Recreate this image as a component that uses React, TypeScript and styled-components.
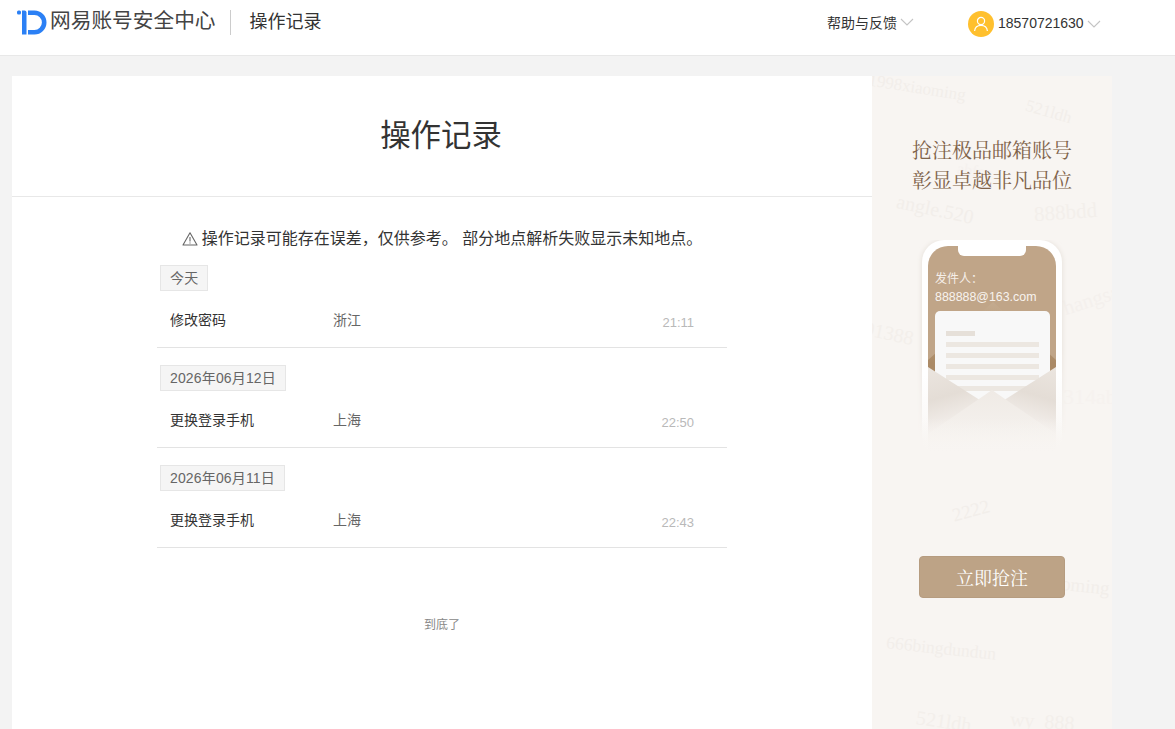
import React from 'react'
import styled, { createGlobalStyle } from 'styled-components'

const GlobalStyle = createGlobalStyle`
  html, body {
    margin: 0;
    padding: 0;
    height: 100%;
    overflow: hidden;
    background: #f3f3f3;
    font-family: "Liberation Sans", "Noto Sans CJK SC", sans-serif;
  }
`

const records = [
  { date: '今天', name: '修改密码', place: '浙江', time: '21:11' },
  { date: '2026年06月12日', name: '更换登录手机', place: '上海', time: '22:50' },
  { date: '2026年06月11日', name: '更换登录手机', place: '上海', time: '22:43' },
]

const marks = [
  { text: '1998xiaoming', x: -4, y: 2, r: 9, s: 17, c: '#f2eeea' },
  { text: '521ldh', x: 153, y: 26, r: 16, s: 17, c: '#f2eeea' },
  { text: 'abfcc', x: 85, y: 86, r: 8, s: 16, c: '#f5f1ee' },
  { text: 'angle.520', x: 24, y: 122, r: 12, s: 20, c: '#f2eeea' },
  { text: '888bdd', x: 162, y: 124, r: -4, s: 21, c: '#f3efeb' },
  { text: 'hangsan', x: 190, y: 210, r: -18, s: 21, c: '#f4f0ed' },
  { text: '91388', x: -8, y: 246, r: 12, s: 20, c: '#f3efeb' },
  { text: '314abc', x: 191, y: 308, r: 0, s: 22, c: '#f6f2ef' },
  { text: '2222', x: 80, y: 424, r: -15, s: 19, c: '#f2eeea' },
  { text: 'xiaoming', x: 166, y: 498, r: 6, s: 19, c: '#f2eeea' },
  { text: '666bingdundun', x: 14, y: 562, r: 6, s: 17.6, c: '#f2eeea' },
  { text: '521ldh', x: 44, y: 634, r: 8, s: 20, c: '#f3efeb' },
  { text: 'wy_888', x: 138, y: 634, r: 4, s: 20, c: '#f3efeb' },
]

const Header = styled.header`
  height: 55px;
  background: #fff;
  border-bottom: 1px solid #e8e8e8;
  display: flex;
  align-items: flex-start;
  padding-left: 17px;
`
const Brand = styled.div`
  display: flex;
  align-items: center;
  height: 44px;
  width: 810px;
`
const BrandName = styled.span`
  font-size: 20.7px;
  line-height: 26px;
  padding-bottom: 2px;
  color: #444;
  margin-left: 3px;
  white-space: nowrap;
`
const Divider = styled.i`
  width: 1px;
  height: 25px;
  background: #ccc;
  margin: 0 19px 0 14px;
`
const PageName = styled.span`
  font-size: 18px;
  line-height: 24px;
  padding-bottom: 1px;
  color: #333;
`
const HeaderLink = styled.div`
  display: flex;
  align-items: center;
  height: 47px;
  font-size: 14px;
  color: #333;
  gap: 3px;
`
const HelpLink = styled(HeaderLink)`
  width: 141px;
  height: 44px;
`
const Avatar = styled.span`
  width: 26px;
  height: 26px;
  border-radius: 50%;
  background: #ffc02e;
  display: flex;
  align-items: center;
  justify-content: center;
`
const Account = styled.span`
  margin-left: 1px;
  padding-bottom: 2px;
`
const Wrap = styled.div`
  display: flex;
  width: 1100px;
  margin: 20px 0 0 12px;
`
const Main = styled.main`
  width: 860px;
  height: 653px;
  background: #fff;
`
const Title = styled.h1`
  margin: 0;
  height: 120px;
  padding-right: 2px;
  line-height: 118px;
  font-size: 30.4px;
  font-weight: 400;
  color: #333;
  text-align: center;
  border-bottom: 1px solid #e8e8e8;
`
const Notice = styled.p`
  margin: 30px 0 0;
  height: 24px;
  display: flex;
  align-items: center;
  justify-content: center;
  gap: 4px;
  font-size: 16px;
  line-height: 24px;
  color: #333;
  white-space: pre;
`
const List = styled.section`
  width: 570px;
  margin: 14px 0 0 145px;
`
const Group = styled.div`
  height: 82px;
  margin-bottom: 17px;
  border-bottom: 1px solid #e3e3e3;
`
const DateTag = styled.span`
  display: inline-block;
  margin-left: 3px;
  padding: 0 9px;
  height: 24px;
  line-height: 24px;
  font-size: 14px;
  letter-spacing: 0.15px;
  color: #666;
  background: #f5f5f5;
  border: 1px solid #e6e6e6;
`
const Row = styled.div`
  display: flex;
  align-items: flex-start;
  height: 56px;
  padding: 18px 33px 0 13px;
  box-sizing: border-box;
  font-size: 14px;
  line-height: 22px;
`
const RecordName = styled.span`
  width: 163px;
  color: #333;
`
const Place = styled.span`
  flex: 1;
  color: #666;
`
const Time = styled.span`
  font-size: 13px;
  color: #b9b9b9;
  padding-top: 3px;
`
const Bottom = styled.p`
  margin: 69px 0 0;
  font-size: 12px;
  line-height: 16px;
  color: #888;
  text-align: center;
`
const Ad = styled.aside`
  position: relative;
  width: 240px;
  height: 653px;
  overflow: hidden;
  background: #f8f5f2;
  display: flex;
  flex-direction: column;
  align-items: center;
  font-family: "Noto Serif CJK SC", "Liberation Serif", serif;
`
const Mark = styled.span<{ $x: number; $y: number; $r: number; $s: number; $c: string }>`
  position: absolute;
  left: ${p => p.$x}px;
  top: ${p => p.$y}px;
  transform: rotate(${p => p.$r}deg);
  font-family: "Liberation Serif", serif;
  font-size: ${p => p.$s}px;
  white-space: nowrap;
  color: ${p => p.$c};
`
const Slogan = styled.div`
  position: relative;
  margin-top: 59px;
  font-size: 20px;
  line-height: 30px;
  color: #7f634a;
  text-align: center;
`
const Phone = styled.svg`
  position: relative;
  display: block;
  flex: none;
  margin-top: 45px;
  width: 150px;
  height: 220px;
`
const GrabButton = styled.button`
  position: relative;
  flex: none;
  width: 146px;
  height: 42px;
  margin-top: 96px;
  padding: 0;
  border: 1px solid #b69c80;
  border-radius: 4px;
  background: #bda386;
  color: #fff;
  font-family: inherit;
  font-size: 18px;
`

const Chevron = () => (
  <svg width="14" height="8" viewBox="0 0 14 8" fill="none" stroke="#c4c4c4" strokeWidth="1.1">
    <path d="M1 1l6 6 6-6" />
  </svg>
)

const Logo = () => (
  <svg width="30" height="25" viewBox="0 0 30 25">
    <rect x="0" y="0.5" width="4" height="4" rx="1.5" fill="#2b80f5" />
    <path d="M5 0.5h2.5a2 2 0 0 1 2 2V24.5H5z" fill="#2b80f5" />
    <path d="M11 0.5h6.5a12 12 0 0 1 0 24H11v-4.6h6.5a7.4 7.4 0 0 0 0-14.8H11z" fill="#2b80f5" />
  </svg>
)

const PhoneArt = () => (
  <Phone viewBox="0 0 150 220">
    <defs>
      <filter id="soft" x="-10%" y="-10%" width="120%" height="120%">
        <feGaussianBlur stdDeviation="2" />
      </filter>
      <linearGradient id="halo" x1="0" y1="0" x2="0" y2="1">
        <stop offset="0.5" stopColor="#e9e4de" />
        <stop offset="0.92" stopColor="#f8f5f2" />
      </linearGradient>
      <linearGradient id="fade" x1="0" y1="0" x2="0" y2="1">
        <stop offset="0.62" stopColor="#fff" />
        <stop offset="1" stopColor="#f8f5f2" />
      </linearGradient>
      <linearGradient id="back" x1="0" y1="0" x2="0" y2="1">
        <stop offset="0" stopColor="#c4ab8f" />
        <stop offset="0.62" stopColor="#ab8a66" />
      </linearGradient>
      <linearGradient id="flapL" gradientUnits="userSpaceOnUse" x1="11" y1="127" x2="30" y2="190">
        <stop offset="0" stopColor="#ebe5df" />
        <stop offset="0.5" stopColor="#e4ddd6" />
        <stop offset="1" stopColor="#f5f1ee" />
      </linearGradient>
      <linearGradient id="flapR" gradientUnits="userSpaceOnUse" x1="139" y1="127" x2="120" y2="190">
        <stop offset="0" stopColor="#ebe5df" />
        <stop offset="0.5" stopColor="#e4ddd6" />
        <stop offset="1" stopColor="#f5f1ee" />
      </linearGradient>
      <linearGradient id="front" x1="0" y1="0" x2="0" y2="1">
        <stop offset="0" stopColor="#efeae5" />
        <stop offset="1" stopColor="#f7f4f1" />
      </linearGradient>
      <linearGradient id="veil" x1="0" y1="0" x2="0" y2="1">
        <stop offset="0" stopColor="#f8f5f2" stopOpacity="0" />
        <stop offset="0.8" stopColor="#f8f5f2" />
      </linearGradient>
    </defs>
    <rect x="4" y="0" width="142" height="218" rx="22" fill="url(#halo)" filter="url(#soft)" />
    <rect x="5" y="0" width="140" height="218" rx="22" fill="url(#fade)" />
    <path d="M11 26a20 20 0 0 1 20-20h88a20 20 0 0 1 20 20v186H11z" fill="#c0a588" />
    <path d="M11 120l65-58 63 58v40H11z" fill="url(#back)" />
    <path d="M41 6h68v4a6 6 0 0 1-6 6H47a6 6 0 0 1-6-6z" fill="#fff" />
    <text x="18" y="43" fontFamily="Noto Sans CJK SC, sans-serif" fontSize="12" fill="#f6efe8">发件人：</text>
    <text x="18" y="61" fontFamily="Liberation Sans, sans-serif" fontSize="12.4" fill="#f8f3ee">888888@163.com</text>
    <rect x="18" y="71" width="115" height="100" rx="5" fill="#f8f8f8" />
    <rect x="29" y="91" width="29" height="5" fill="#e6e0d9" />
    <rect x="29" y="102" width="93" height="5" fill="#ece7e1" />
    <rect x="29" y="113" width="93" height="5" fill="#ece7e1" />
    <rect x="29" y="124" width="93" height="5" fill="#ece7e1" />
    <rect x="29" y="135" width="93" height="5" fill="#ece7e1" />
    <rect x="29" y="146" width="93" height="5" fill="#ece7e1" />
    <path d="M11 127l69 44-69 41z" fill="url(#flapL)" />
    <path d="M139 127l-69 44 69 41z" fill="url(#flapR)" />
    <path d="M75 150l64 44v18H11v-18z" fill="url(#front)" />
    <rect x="0" y="178" width="150" height="42" fill="url(#veil)" />
  </Phone>
)

export default function App() {
  return (
    <>
      <GlobalStyle />
      <Header>
        <Brand>
          <Logo />
          <BrandName>网易账号安全中心</BrandName>
          <Divider />
          <PageName>操作记录</PageName>
        </Brand>
        <HelpLink>
          帮助与反馈
          <Chevron />
        </HelpLink>
        <HeaderLink>
          <Avatar>
            <svg width="16" height="16" viewBox="0 0 16 16" fill="none" stroke="#fff" strokeWidth="1.2">
              <circle cx="8" cy="5" r="3.6" />
              <path d="M1.6 15c.4-3.6 3-5.6 6.4-5.6s6 2 6.4 5.6" />
            </svg>
          </Avatar>
          <Account>18570721630</Account>
          <Chevron />
        </HeaderLink>
      </Header>
      <Wrap>
        <Main>
          <Title>操作记录</Title>
          <Notice>
            <svg width="16" height="16" viewBox="0 0 16 16" fill="none" stroke="#666" strokeWidth="1.1">
              <path d="M8 1.8L15 14H1z" strokeLinejoin="round" />
              <path d="M8 6v4.4M8 11.4v1.2" />
            </svg>
            操作记录可能存在误差，仅供参考。 部分地点解析失败显示未知地点。
          </Notice>
          <List>
            {records.map(item => (
              <Group key={item.date}>
                <DateTag>{item.date}</DateTag>
                <Row>
                  <RecordName>{item.name}</RecordName>
                  <Place>{item.place}</Place>
                  <Time>{item.time}</Time>
                </Row>
              </Group>
            ))}
          </List>
          <Bottom>到底了</Bottom>
        </Main>
        <Ad>
          {marks.map(m => (
            <Mark key={m.text + m.x} $x={m.x} $y={m.y} $r={m.r} $s={m.s} $c={m.c}>
              {m.text}
            </Mark>
          ))}
          <Slogan>
            抢注极品邮箱账号
            <br />
            彰显卓越非凡品位
          </Slogan>
          <PhoneArt />
          <GrabButton>立即抢注</GrabButton>
        </Ad>
      </Wrap>
    </>
  )
}
